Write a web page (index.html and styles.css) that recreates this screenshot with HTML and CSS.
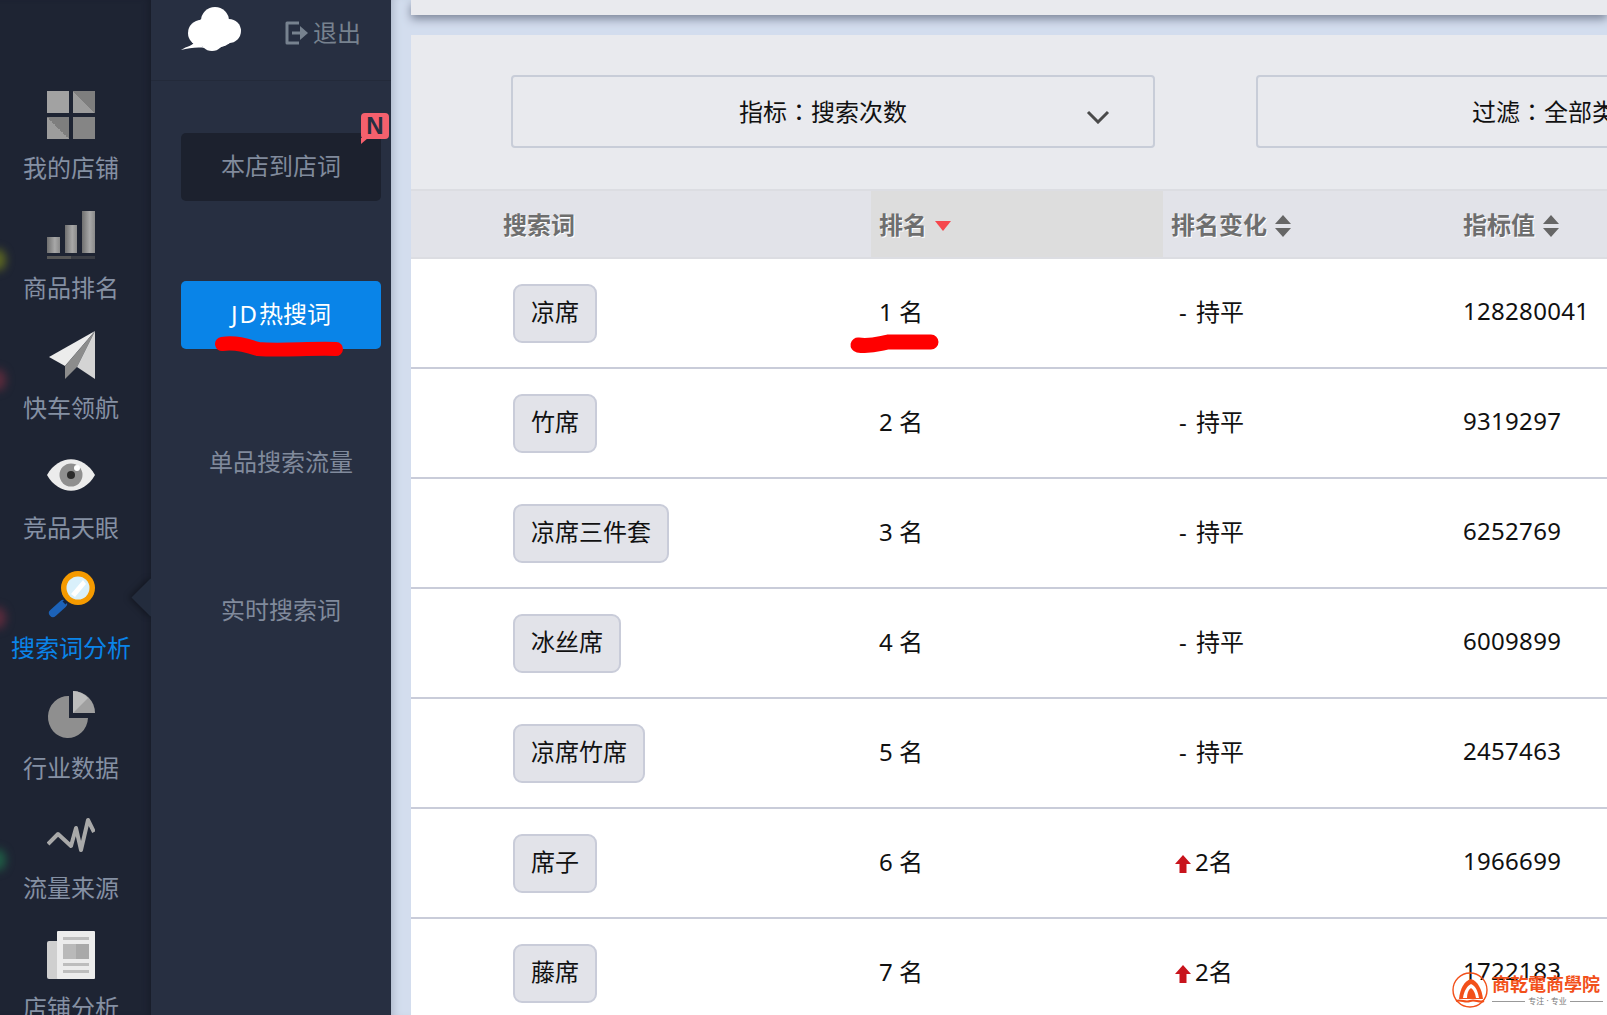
FILE: index.html
```html
<!DOCTYPE html>
<html lang="zh-CN">
<head>
    <meta charset="UTF-8">
    <title>搜索词分析</title>
    <link rel="stylesheet" href="styles.css">
</head>
<body>

    <div class="glow glow-yellow"></div>
    <div class="glow glow-red-1"></div>
    <div class="glow glow-red-2"></div>
    <div class="glow glow-green"></div>

    <!-- first level menu -->
    <div class="rail">
        <div class="rail-item">
            <svg class="rail-icon" viewBox="0 0 48 48">
                <defs>
                    <linearGradient id="tile" x1="0" y1="1" x2="1" y2="0">
                        <stop offset="0.5" stop-color="#9c9c9c"/>
                        <stop offset="0.5" stop-color="#7e7e7e"/>
                    </linearGradient>
                </defs>
                <rect width="22" height="22" fill="#a2a2a2"/>
                <rect x="26" width="22" height="22" fill="url(#tile)"/>
                <rect y="26" width="22" height="22" fill="url(#tile)"/>
                <rect x="26" y="26" width="22" height="22" fill="#858585"/>
            </svg>
            <div class="rail-label">我的店铺</div>
        </div>
        <div class="rail-item">
            <svg class="rail-icon" viewBox="0 0 48 48">
                <defs>
                    <linearGradient id="bar">
                        <stop offset="0" stop-color="#6f6f6f"/>
                        <stop offset="0.6" stop-color="#a8a8a8"/>
                        <stop offset="1" stop-color="#8a8a8a"/>
                    </linearGradient>
                </defs>
                <rect y="26" width="13" height="16" fill="url(#bar)"/>
                <rect x="18" y="14" width="12" height="28" fill="url(#bar)"/>
                <rect x="35" width="13" height="42" fill="url(#bar)"/>
                <rect y="45" width="24" height="3" fill="#565656"/>
                <rect x="24" y="45" width="24" height="3" fill="#3a3d45"/>
            </svg>
            <div class="rail-label">商品排名</div>
        </div>
        <div class="rail-item">
            <svg class="rail-icon" viewBox="0 0 48 48">
                <path d="M48 0 L2 26 L18 35 Z" fill="#ececec"/>
                <path d="M48 0 L18 35 L18 48 L30 36 Z" fill="#8c8c8c"/>
                <path d="M48 0 L30 36 L48 48 Z" fill="#d4d4d4"/>
            </svg>
            <div class="rail-label">快车领航</div>
        </div>
        <div class="rail-item">
            <svg class="rail-icon" viewBox="0 0 48 48">
                <path d="M0 24 C12 3 36 3 48 24 C36 45 12 45 0 24 Z" fill="#ececec"/>
                <circle cx="24" cy="24" r="11.5" fill="#8f8f8f"/>
                <circle cx="24" cy="24" r="4" fill="#2b2b2b"/>
                <circle cx="30" cy="17" r="3" fill="#fff"/>
            </svg>
            <div class="rail-label">竞品天眼</div>
        </div>
        <div class="rail-item active">
            <svg class="rail-icon" viewBox="0 0 48 48">
                <path d="M6 42 L16 33" stroke="#1c62b8" stroke-width="8" stroke-linecap="round"/>
                <path d="M17 32 L22 27" stroke="#12233f" stroke-width="4"/>
                <circle cx="31" cy="17" r="17" fill="#f59a00"/>
                <circle cx="31" cy="17" r="11.5" fill="#d9f0fb"/>
                <path d="M24 23 L36 9 L39 13 L28 26 Z" fill="#fff"/>
            </svg>
            <div class="rail-label">搜索词分析</div>
            <span class="rail-pointer"></span>
        </div>
        <div class="rail-item">
            <svg class="rail-icon" viewBox="0 0 48 48">
                <path d="M22 5 L22 27 L41 27 A20 21 0 1 1 22 5 Z" fill="#8f8f8f"/>
                <path d="M26 0 A22 22 0 0 1 48 22 L26 22 Z" fill="#a0a0a0"/>
                <path d="M26 0 A22 22 0 0 1 41 7 L26 22 Z" fill="#bdbdbd"/>
            </svg>
            <div class="rail-label">行业数据</div>
        </div>
        <div class="rail-item">
            <svg class="rail-icon" viewBox="0 0 48 48">
                <polyline points="1,33 11,23 24,35 29,17 34,39 41,9 47,21" fill="none" stroke="#a9a9a9" stroke-width="4" stroke-linejoin="round"/>
            </svg>
            <div class="rail-label">流量来源</div>
        </div>
        <div class="rail-item">
            <svg class="rail-icon" viewBox="0 0 48 48">
                <rect y="10" width="14" height="38" rx="2" fill="#cfcfcf"/>
                <rect x="10" width="38" height="48" rx="1" fill="#ececec"/>
                <rect x="16" y="6" width="26" height="3" fill="#bdbdbd"/>
                <rect x="16" y="13" width="13" height="15" fill="#b9b9b9"/>
                <rect x="29" y="13" width="13" height="15" fill="#a9a9a9"/>
                <rect x="16" y="32" width="26" height="3" fill="#bdbdbd"/>
                <rect x="16" y="39" width="26" height="3" fill="#bdbdbd"/>
            </svg>
            <div class="rail-label">店铺分析</div>
        </div>
    </div>

    <!-- second level menu -->
    <div class="panel">
        <div class="panel-top">
            <svg class="cloud" viewBox="0 0 60 44">
                <ellipse cx="33" cy="25" rx="22" ry="16" fill="#fff"/>
                <circle cx="34" cy="14" r="14" fill="#fff"/>
                <circle cx="20" cy="26" r="13" fill="#fff"/>
                <circle cx="48" cy="24" r="12" fill="#fff"/>
                <circle cx="31" cy="32" r="12" fill="#fff"/>
                <path d="M0 43 C6 39 12 39 14 34 L24 41 C16 40 8 41 0 43 Z" fill="#fff"/>
            </svg>
            <div class="logout">
                <svg class="logout-icon" viewBox="0 0 24 24">
                    <path d="M14 2 H2 V22 H14" fill="none" stroke="#77828f" stroke-width="3" stroke-linejoin="round"/>
                    <path d="M7 12 H17" stroke="#77828f" stroke-width="3"/>
                    <path d="M15 5 L23 12 L15 19 Z" fill="#77828f"/>
                </svg>
                <span>退出</span>
            </div>
        </div>
        <div class="sub-nav">
            <div class="sub-item dark">本店到店词<span class="badge">N</span></div>
            <div class="sub-item selected"><span class="latin">JD</span>热搜词</div>
            <div class="sub-item">单品搜索流量</div>
            <div class="sub-item">实时搜索词</div>
        </div>
    </div>

    <div class="content">
        <div class="topbar"></div>
        <div class="filters">
            <div class="select">
                <span>指标<span class="colon" lang="zh-TW">：</span>搜索次数</span>
                <svg class="chevron" viewBox="0 0 24 14">
                    <polyline points="2,2 12,12 22,2" fill="none" stroke="#4a4a4a" stroke-width="3"/>
                </svg>
            </div>
            <div class="select select-filter">
                <span>过滤<span class="colon" lang="zh-TW">：</span>全部类目</span>
            </div>
        </div>

        <table class="rank-table">
            <colgroup>
                <col class="col-word">
                <col class="col-num">
                <col class="col-num">
                <col class="col-num">
            </colgroup>
            <thead>
                <tr>
                    <th class="th-word">搜索词</th>
                    <th class="sorted">排名<svg class="sort-down" viewBox="0 0 16 10"><path d="M0 0 H16 L8 10 Z" fill="#f5474d"/></svg></th>
                    <th>排名变化<svg class="sort-both" viewBox="0 0 16 22"><path d="M0 9 L8 0 L16 9 Z M0 13 H16 L8 22 Z" fill="#666"/></svg></th>
                    <th>指标值<svg class="sort-both" viewBox="0 0 16 22"><path d="M0 9 L8 0 L16 9 Z M0 13 H16 L8 22 Z" fill="#666"/></svg></th>
                </tr>
            </thead>
            <tbody>
                <tr>
                    <td class="td-word"><span class="tag">凉席</span></td>
                    <td>1 名</td>
                    <td class="flat">- 持平</td>
                    <td class="value">128280041</td>
                </tr>
                <tr>
                    <td class="td-word"><span class="tag">竹席</span></td>
                    <td>2 名</td>
                    <td class="flat">- 持平</td>
                    <td class="value">9319297</td>
                </tr>
                <tr>
                    <td class="td-word"><span class="tag">凉席三件套</span></td>
                    <td>3 名</td>
                    <td class="flat">- 持平</td>
                    <td class="value">6252769</td>
                </tr>
                <tr>
                    <td class="td-word"><span class="tag">冰丝席</span></td>
                    <td>4 名</td>
                    <td class="flat">- 持平</td>
                    <td class="value">6009899</td>
                </tr>
                <tr>
                    <td class="td-word"><span class="tag">凉席竹席</span></td>
                    <td>5 名</td>
                    <td class="flat">- 持平</td>
                    <td class="value">2457463</td>
                </tr>
                <tr>
                    <td class="td-word"><span class="tag">席子</span></td>
                    <td>6 名</td>
                    <td class="rise"><svg class="up-arrow" viewBox="0 0 16 18"><path d="M8 0 L16 9 H11.5 V18 H4.5 V9 H0 Z" fill="#c8141c"/></svg>2名</td>
                    <td class="value">1966699</td>
                </tr>
                <tr>
                    <td class="td-word"><span class="tag">藤席</span></td>
                    <td>7 名</td>
                    <td class="rise"><svg class="up-arrow" viewBox="0 0 16 18"><path d="M8 0 L16 9 H11.5 V18 H4.5 V9 H0 Z" fill="#c8141c"/></svg>2名</td>
                    <td class="value">1722183</td>
                </tr>
            </tbody>
        </table>
    </div>

    <!-- hand drawn red marks over the screenshot -->
    <svg class="scribble" viewBox="0 0 1607 1015">
        <path d="M222 344 C235 342 246 345 258 349 C280 351 310 348 336 349" fill="none" stroke="#ff0000" stroke-width="14" stroke-linecap="round"/>
        <path d="M858 345 C870 347 878 344 888 342 L931 342" fill="none" stroke="#ff0000" stroke-width="15" stroke-linecap="round"/>
    </svg>

    <!-- watermark -->
    <div class="watermark">
        <svg class="wm-logo" viewBox="0 0 36 36">
            <circle cx="18" cy="18" r="17" fill="none" stroke="#f2501a" stroke-width="1.4"/>
            <path d="M7 27 C8 17 12 9 19 7 C26 9 30 18 31 27 Z" fill="#f2501a"/>
            <path d="M11 26 C12 19 15 14 19 12 C24 14 26 20 27 26 H24 C23 21 22 18 19 16 C16 18 15 22 15 26 Z" fill="#fff"/>
            <path d="M17 26 C17 23 18 21 19 20 C21 21 22 23 22 26 Z" fill="#f2501a"/>
            <path d="M4 29 C9 27 13 31 18 29 C23 27 27 31 32 29" fill="none" stroke="#f2501a" stroke-width="2"/>
        </svg>
        <div class="wm-text">
            <div class="wm-name" lang="zh-TW">商乾電商學院</div>
            <div class="wm-slogan"><i></i><span>专注 · 专业</span><i></i></div>
        </div>
    </div>

</body>
</html>
```

FILE: styles.css
```css
html, body {
    margin: 0;
    padding: 0;
    height: 100%;
}
body {
    position: relative;
    display: flex;
    height: 100vh;
    overflow: hidden;
    font-family: "Noto Sans", "Noto Sans CJK SC", sans-serif;
    font-size: 24px;
    color: #111;
    background-color: #d3ddee;
}

/* first level menu */
.rail {
    flex: 0 0 151px;
    padding: 91px 9px 0 0;
    box-sizing: border-box;
    background-color: #1e2433;
    text-align: center;
    box-shadow: inset -6px 0 8px -6px #151925;
}
.rail-item {
    position: relative;
    height: 120px;
}
.rail-icon {
    display: block;
    width: 48px;
    height: 48px;
    margin: 0 auto;
}
.rail-label {
    margin-top: 17px;
    line-height: 24px;
    white-space: nowrap;
    color: #8590a3;
}
.active .rail-label {
    color: #0a84e9;
}
.rail-pointer {
    position: absolute;
    left: 137px;
    top: 13px;
    width: 27px;
    height: 27px;
    background-color: #232c3d;
    transform: rotate(45deg);
    box-shadow: -2px 2px 6px rgba(0, 0, 0, 0.35);
}

.glow {
    position: absolute;
    left: -10px;
    width: 16px;
    height: 22px;
    border-radius: 50%;
    filter: blur(4px);
    z-index: 3;
}
.glow-yellow { top: 249px; background-color: #5c6622; }
.glow-red-1 { top: 369px; background-color: #5b2b3c; }
.glow-red-2 { top: 607px; background-color: #5b2b3c; }
.glow-green { top: 849px; background-color: #1f5c45; }

/* second level menu */
.panel {
    position: relative;
    flex: 0 0 240px;
    background-color: #272f41;
    z-index: 1;
}
.panel-top {
    display: flex;
    align-items: flex-start;
    height: 81px;
    padding-left: 30px;
    box-sizing: border-box;
    border-bottom: 1px solid #232a3a;
}
.cloud {
    width: 60px;
    height: 44px;
    margin-top: 7px;
}
.logout {
    display: flex;
    align-items: center;
    margin: 21px 0 0 44px;
    line-height: 24px;
    color: #77828f;
}
.logout-icon {
    width: 24px;
    height: 24px;
    margin-right: 4px;
}
.sub-nav {
    display: flex;
    flex-direction: column;
    gap: 80px;
    width: 200px;
    margin: 52px 0 0 30px;
}
.sub-item {
    position: relative;
    height: 68px;
    line-height: 66px;
    border-radius: 5px;
    text-align: center;
    color: #808a9c;
}
.sub-item.dark {
    background-color: #1c212e;
}
.sub-item.selected {
    background-color: #0984e8;
    color: #fff;
}
.latin {
    letter-spacing: 2px;
}
.badge {
    position: absolute;
    right: -8px;
    top: -20px;
    width: 28px;
    height: 26px;
    border-radius: 4px;
    background-color: #f5606d;
    color: #272f41;
    font-family: "Liberation Sans", sans-serif;
    font-size: 24px;
    font-weight: bold;
    line-height: 26px;
}
.badge::after {
    content: "";
    position: absolute;
    left: 0;
    bottom: -5px;
    border-top: 6px solid #f5606d;
    border-right: 7px solid transparent;
}

/* main area */
.content {
    flex: 1 1 auto;
    min-width: 0;
    padding-left: 20px;
    overflow: hidden;
    box-shadow: inset 8px 0 8px -6px #aab4c6;
}
.topbar {
    height: 15px;
    background-color: #e9eaee;
    box-shadow: 0 4px 10px #7d8699;
    margin-bottom: 20px;
}
.filters {
    display: flex;
    gap: 101px;
    height: 154px;
    padding: 40px 0 0 100px;
    box-sizing: border-box;
    background-color: #e9eaee;
}
.select {
    position: relative;
    flex: 0 0 644px;
    height: 73px;
    box-sizing: border-box;
    padding-right: 20px;
    border: 2px solid #c8cdd8;
    border-radius: 4px;
    line-height: 68px;
    text-align: center;
    white-space: nowrap;
}
.select-filter {
    padding-right: 44px;
}
.colon {
    font-family: "Noto Sans CJK TC", sans-serif;
}
.chevron {
    position: absolute;
    right: 43px;
    top: 33px;
    width: 24px;
    height: 14px;
}

/* table */
.rank-table {
    width: 1336px;
    table-layout: fixed;
    border-collapse: separate;
    border-spacing: 0;
    background-color: #fff;
}
.col-word { width: 460px; }
.col-num { width: 292px; }
.rank-table th {
    height: 70px;
    box-sizing: border-box;
    padding: 0 0 2px 8px;
    border-top: 2px solid #dcdde2;
    border-bottom: 2px solid #dcdde2;
    background-color: #e2e3e9;
    color: #6e6e6e;
    font-weight: bold;
    text-align: left;
    text-shadow: 1px 1px 0 #fff;
}
.rank-table th.th-word {
    padding-left: 92px;
}
.rank-table th.sorted {
    background-color: #dddddd;
}
.sort-down {
    width: 16px;
    height: 10px;
    margin-left: 8px;
    vertical-align: 3px;
}
.sort-both {
    width: 16px;
    height: 22px;
    margin-left: 8px;
    vertical-align: -3px;
}
.rank-table td {
    height: 110px;
    box-sizing: border-box;
    padding: 0 0 6px 8px;
    border-bottom: 2px solid #c9ccd9;
    white-space: nowrap;
}
.rank-table td.td-word {
    padding: 0 0 0 102px;
}
.rank-table td.flat {
    padding-left: 16px;
    word-spacing: 3px;
}
.rank-table td.rise {
    padding-left: 12px;
}
.rank-table td.value {
    letter-spacing: 0.3px;
}
.up-arrow {
    width: 16px;
    height: 18px;
    margin-right: 4px;
    vertical-align: -2px;
}
.tag {
    display: inline-block;
    padding: 0 16px 3px;
    line-height: 52px;
    border: 2px solid #c9ccd9;
    border-radius: 9px;
    background-color: #e2e3e9;
}

/* overlays */
.scribble {
    position: absolute;
    left: 0;
    top: 0;
    width: 1607px;
    height: 1015px;
    z-index: 2;
    pointer-events: none;
}
.watermark {
    position: absolute;
    left: 1452px;
    top: 972px;
    display: flex;
    z-index: 2;
}
.wm-logo {
    width: 36px;
    height: 36px;
}
.wm-text {
    margin-left: 4px;
    width: 111px;
}
.wm-name {
    font-family: "Noto Sans CJK TC", serif;
    font-size: 18px;
    font-weight: bold;
    line-height: 22px;
    white-space: nowrap;
    color: #f2501a;
}
.wm-slogan {
    display: flex;
    align-items: center;
    gap: 3px;
    margin-top: 1px;
    font-size: 8px;
    line-height: 12px;
    color: #777;
    white-space: nowrap;
}
.wm-slogan i {
    flex: 1 1 auto;
    height: 1px;
    background-color: #999;
}
```
